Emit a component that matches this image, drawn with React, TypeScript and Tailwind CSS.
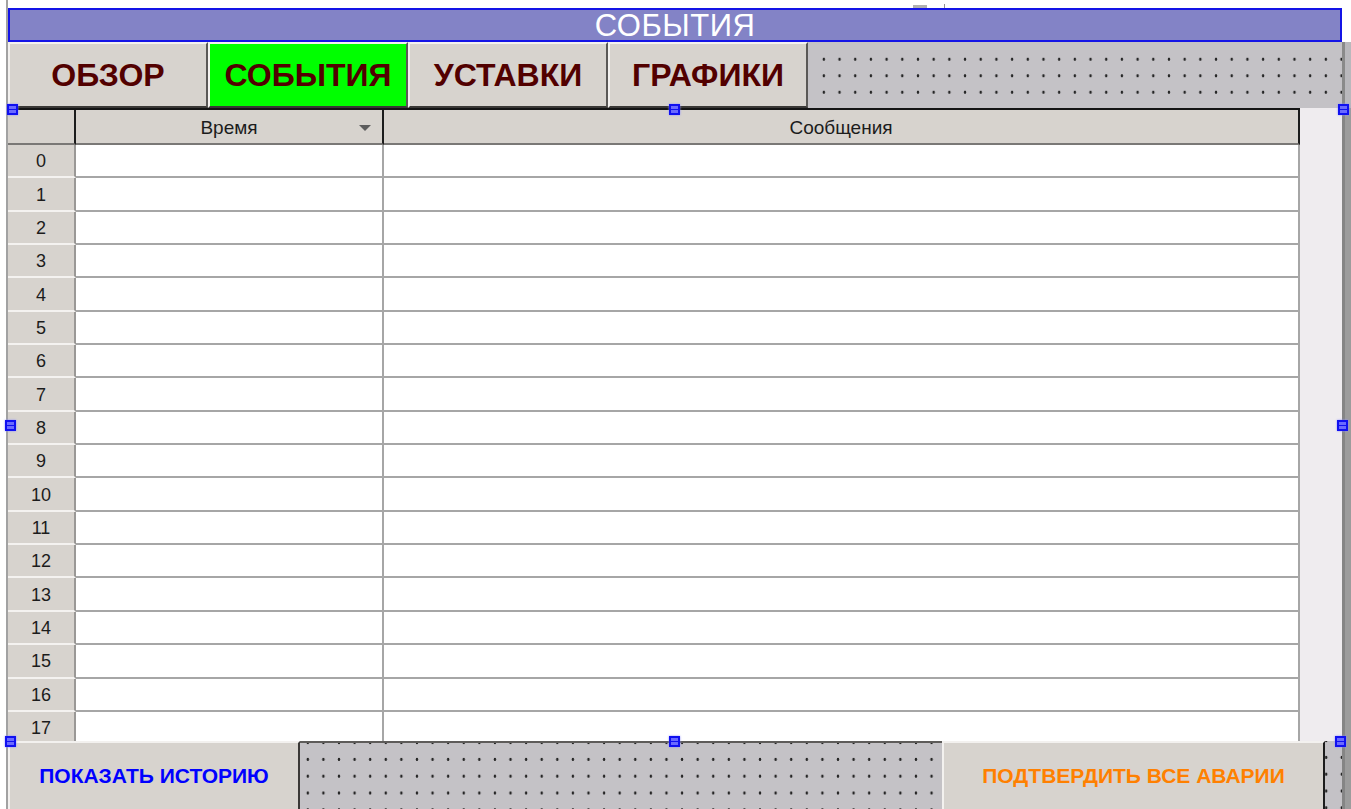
import React from 'react';

const tabs = [
  { label: 'ОБЗОР', active: false },
  { label: 'СОБЫТИЯ', active: true },
  { label: 'УСТАВКИ', active: false },
  { label: 'ГРАФИКИ', active: false },
];

const rows = Array.from({ length: 18 }, (_, i) => i);

// dotted grid of an empty design surface
const dots =
  'bg-[#c4c2c6] bg-[radial-gradient(circle,_#262626_1.1px,_transparent_1.6px)]';

const Handle = ({ className }: { className: string }) => (
  <div
    className={`absolute w-[11px] h-[11px] border-2 border-[#1010f0] bg-[#6a6aff] shadow-[0_0_2px_#9090ff] flex items-center ${className}`}
  >
    <div className="w-full h-px bg-[#1010f0]" />
  </div>
);

export default function App() {
  return (
    <div className="relative w-[1351px] h-[809px] bg-white flex overflow-hidden font-['Liberation_Sans',Arial,sans-serif]">
      <div className="w-[6px] shrink-0" />
      <div className="w-[2px] shrink-0 bg-[#a2a2a2]" />

      <div className="flex flex-col w-[1343px]">
        <div className="h-[8px] shrink-0" />

        {/* title bar */}
        <div className="flex h-[34px] shrink-0">
          <div className="w-[1334px] bg-[#8383c6] border-2 border-[#1414e6] flex items-center justify-center text-white text-[31px] leading-none tracking-[0.5px]">
            СОБЫТИЯ
          </div>
        </div>

        {/* navigation tabs */}
        <div className="flex h-[66px] shrink-0">
          {tabs.map((t) => (
            <div
              key={t.label}
              className={`w-[200px] flex items-center justify-center border-t-2 border-l-2 border-t-[#f3f1ef] border-l-[#f3f1ef] border-r-2 border-b-2 border-r-[#5a5856] border-b-[#3a3836] text-[32px] font-bold text-[#520000] leading-none ${
                t.active ? 'bg-[#00ff00]' : 'bg-[#d7d3ce]'
              }`}
            >
              {t.label}
            </div>
          ))}
          <div className="w-[534px] bg-[#c4c2c6]">
            <div className={`mt-[9px] ml-[8px] h-[49.5px] ${dots} bg-[length:15.7px_16.5px]`} />
          </div>
          <div className="w-[9px] bg-[#b9b8bc] border-l-[3px] border-[#8a8a8a]" />
        </div>

        {/* events table */}
        <div className="flex h-[633px] shrink-0">
          <div className="w-[1292px] flex flex-col border-t-2 border-[#141414] overflow-hidden">
            <div className="flex h-[35px] shrink-0 text-[19px] text-[#1c1c1c]">
              <div className="w-[68px] bg-[#d7d3ce] border-r-2 border-b-2 border-r-[#1c1c1c] border-b-[#7a7876]" />
              <div className="w-[308px] relative bg-[#d7d3ce] border-r-2 border-b-2 border-r-[#1c1c1c] border-b-[#7a7876] flex items-center justify-center pt-[3px]">
                Время
                <span className="absolute right-[11px] top-[15px] w-0 h-0 border-l-[6px] border-r-[6px] border-t-[6px] border-l-transparent border-r-transparent border-t-[#5c5c5c]" />
              </div>
              <div className="w-[916px] bg-[#d7d3ce] border-r-2 border-b-2 border-r-[#1c1c1c] border-b-[#7a7876] flex items-center justify-center pt-[3px]">
                Сообщения
              </div>
            </div>
            {rows.map((r) => (
              <div key={r} className="flex h-[33.35px] shrink-0">
                <div className="w-[68px] bg-[#d7d3ce] border-b-2 border-r-2 border-b-[#f4f2f0] border-r-[#9a9896] flex items-center justify-center text-[18px] text-[#1c1c1c] pt-[2px]">
                  {r}
                </div>
                <div className="w-[308px] bg-white border-b-2 border-r-2 border-[#a6a6a6]" />
                <div className="w-[916px] bg-white border-b-2 border-r-2 border-[#a6a6a6]" />
              </div>
            ))}
          </div>
          <div className="w-[42px] bg-[#efecef]" />
          <div className="w-[9px] bg-[#9c9c9c] border-l-[3px] border-[#858585]" />
        </div>

        {/* bottom actions */}
        <div className="flex h-[68px] shrink-0">
          <div className="w-[292px] bg-[#d7d3ce] border-t-2 border-l-2 border-t-[#f3f1ef] border-l-[#f3f1ef] border-r-2 border-r-[#3a3836] flex items-center justify-center text-[21px] font-bold text-[#0000ff]">
            ПОКАЗАТЬ ИСТОРИЮ
          </div>
          <div className="w-[642px] bg-[#c4c2c6] border-t-2 border-[#5e5c5a]">
            <div className={`h-full ${dots} bg-[length:15.6px_16.8px] bg-[position:0px_8px]`} />
          </div>
          <div className="w-[383px] bg-[#d7d3ce] border-t-2 border-l-2 border-t-[#f3f1ef] border-l-[#f3f1ef] border-r-2 border-r-[#1c1c1c] flex items-center justify-center text-[21px] font-bold text-[#ff8000]">
            ПОДТВЕРДИТЬ ВСЕ АВАРИИ
          </div>
          <div className="w-[17px] bg-[#c4c2c6]">
            <div className={`h-full ${dots} bg-[length:15.6px_16.8px] bg-[position:9px_8px]`} />
          </div>
          <div className="w-[9px] bg-[#9c9c9c] border-l-[3px] border-[#858585]" />
        </div>
      </div>

      {/* stray mark above the title */}
      <div className="absolute left-[913px] top-[5px] w-[14px] h-[3px] bg-[#b0b0b0]" />
      <div className="absolute left-[944px] top-[4px] w-px h-[4px] bg-[#909090]" />

      {/* selection handles */}
      <Handle className="left-[7px] top-[104px]" />
      <Handle className="left-[669px] top-[104px]" />
      <Handle className="left-[1338px] top-[104px]" />
      <Handle className="left-[5px] top-[420px]" />
      <Handle className="left-[1337px] top-[420px]" />
      <Handle className="left-[5px] top-[736px]" />
      <Handle className="left-[669px] top-[736px]" />
      <Handle className="left-[1335px] top-[736px]" />
    </div>
  );
}
